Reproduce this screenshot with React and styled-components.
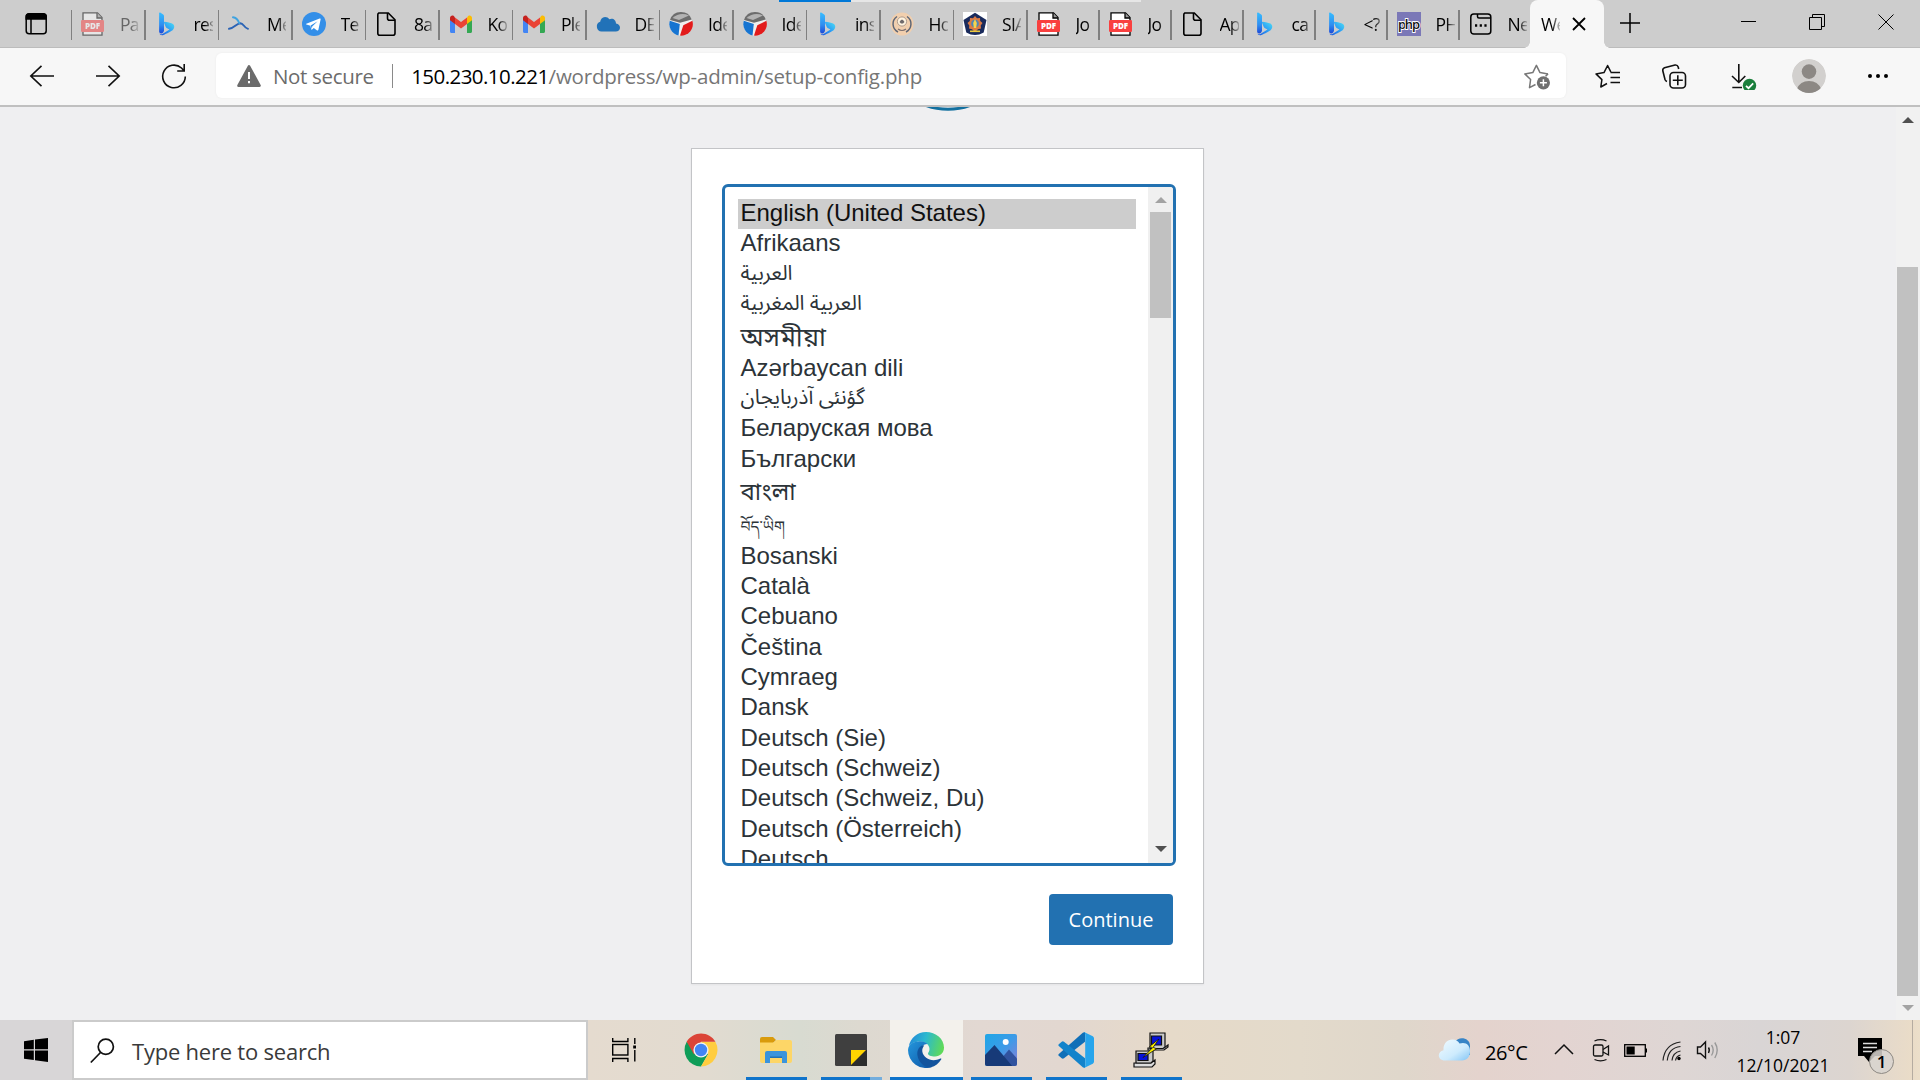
import React from "react";
import styled, { createGlobalStyle, css } from "styled-components";

const GlobalStyle = createGlobalStyle`
  *, *::before, *::after { box-sizing: border-box; }
  html, body { margin: 0; padding: 0; overflow: hidden; }
  body { font-family: "Open Sans", "Noto Sans", sans-serif; color: #000; }
  svg { display: block; flex: none; }
`;

const Screen = styled.div`
  position: relative;
  width: 1920px;
  height: 1080px;
  display: flex;
  flex-direction: column;
  overflow: hidden;
  background: #efeff1;
`;

/* ---------- tab strip ---------- */

const LoadBar = styled.div`
  position: absolute;
  top: 0;
  left: 779px;
  width: 362px;
  height: 2px;
  background: linear-gradient(90deg, #0078d7 72px, #e6e6e6 72px);
`;

const TabStrip = styled.div`
  display: flex;
  height: 48px;
  flex: none;
  background: #cdcdcd;
  border-bottom: 1px solid #bcbcbc;
`;

const TabActions = styled.div`
  width: 70px;
  padding: 12px 0 0 24px;
`;

const Tab = styled.div`
  position: relative;
  display: flex;
  align-items: center;
  flex: none;
  width: ${(p) => p.$width}px;
  height: 48px;
  padding-left: 11px;

  &::before {
    content: "";
    position: absolute;
    left: 0.5px;
    top: 10px;
    width: 1.5px;
    height: 30px;
    background: #808080;
  }
`;

const TabIcon = styled.span`
  width: 24px;
  height: 24px;
  margin-right: 15px;
  flex: none;
  opacity: ${(p) => (p.$faded ? 0.5 : 1)};
`;

const TabTitle = styled.span`
  width: 19px;
  overflow: hidden;
  white-space: nowrap;
  font-size: 17.5px;
  line-height: 24px;
  letter-spacing: -0.7px;
  color: ${(p) => (p.$faded ? "#666" : "#000")};
  mask-image: linear-gradient(90deg, #000 55%, rgba(0, 0, 0, 0.2) 100%);
`;

const ActiveTab = styled.div`
  position: relative;
  display: flex;
  align-items: center;
  flex: none;
  width: 74px;
  height: 48px;
  padding-left: 11px;
  gap: 12px;
  background: #f7f7f7;
  border-radius: 8px 8px 0 0;

  &::before, &::after {
    content: "";
    position: absolute;
    bottom: 0;
    width: 6px;
    height: 6px;
  }
  &::before { left: -6px; background: radial-gradient(circle at 0 0, transparent 5.5px, #f7f7f7 6px); }
  &::after { right: -6px; background: radial-gradient(circle at 100% 0, transparent 5.5px, #f7f7f7 6px); }
`;

const NewTab = styled.div`
  padding: 12px 0 0 15px;
`;

const WindowButtons = styled.div`
  display: flex;
  gap: 53px;
  margin-left: auto;
  padding: 13px 26px 0 0;
`;

/* ---------- toolbar ---------- */

const Toolbar = styled.div`
  display: flex;
  align-items: center;
  flex: none;
  height: 59px;
  padding-bottom: 2px;
  background: #f7f7f7;
  border-bottom: 2px solid #c0c0c0;
`;

const NavButtons = styled.div`
  display: flex;
  gap: 38px;
  width: 216px;
  padding-left: 28px;
`;

const AddressBar = styled.div`
  display: flex;
  align-items: center;
  width: 1350px;
  height: 45px;
  padding: 0 15px 0 20px;
  background: #fff;
  border-radius: 6px;
  font-size: 20.5px;
  white-space: pre;
  box-shadow: 0 0 3px rgba(0, 0, 0, 0.05);
`;

const NotSecure = styled.span`
  margin-left: 11px;
  letter-spacing: -0.33px;
  color: #6b6b6b;
`;

const AddressDivider = styled.span`
  width: 1.5px;
  height: 24px;
  margin: 0 18px 0 18px;
  background: #8a8a8a;
`;

const Host = styled.span`
  letter-spacing: -0.55px;
  color: #000;
`;

const Path = styled.span`
  flex: 1;
  letter-spacing: -0.2px;
  color: #767676;
`;

const ToolbarButtons = styled.div`
  display: flex;
  align-items: center;
  gap: 38px;
  padding-left: 28px;
`;

const AvatarButton = styled.span`
  margin: 0 2px 0 -3px;
`;

/* ---------- page ---------- */

const Viewport = styled.div`
  display: flex;
  flex: none;
  height: 913px;
`;

const Page = styled.main`
  display: flex;
  flex-direction: column;
  align-items: center;
  width: 1896px;
  background: #efeff1;
`;

const LogoClip = styled.div`
  display: flex;
  height: 41px;
  overflow: hidden;
`;

const Card = styled.section`
  display: flex;
  flex-direction: column;
  align-items: flex-end;
  width: 513px;
  height: 836px;
  margin-right: 1px;
  padding: 35px 27px 0 30px;
  background: #fff;
  border: 1px solid #c3c4c7;
  box-shadow: 0 1px 2px rgba(0, 0, 0, 0.05);
`;

const SelectBox = styled.div`
  display: flex;
  width: 454px;
  height: 682px;
  border: 3px solid #2271b1;
  border-radius: 6px;
  background: #fff;
  overflow: hidden;
`;

const OptionList = styled.div`
  flex: 1;
  padding: 12px 12px 0 13px;
  height: 676px;
  overflow: hidden;
`;

const Option = styled.div`
  height: ${(p) => p.$height}px;
  padding-left: 2.5px;
  line-height: 27px;
  font-family: "Liberation Sans", "Noto Sans", "DejaVu Sans", sans-serif;
  font-size: 24px;
  white-space: nowrap;
  color: #2c3338;
  ${(p) => p.$selected && css`background: #cdcdcd; color: #101010;`}
`;

const Script = styled.span`
  display: block;
  padding-top: ${(p) => p.$drop}px;
  font-family: "Noto Sans Arabic", "Noto Sans Bengali", "Noto Serif Tibetan", "DejaVu Sans", sans-serif;
  font-size: ${(p) => p.$size}px;
`;

const SelectScroll = styled.div`
  display: flex;
  flex-direction: column;
  align-items: center;
  width: 25px;
  padding: 10px 0 11px;
  background: #f0f0f0;
`;

const Arrow = styled.i`
  width: 0;
  height: 0;
  border: solid transparent;
  border-width: 0 6px;
  ${(p) => (p.$up
    ? css`border-bottom: 6px solid ${p.$color};`
    : css`border-top: 6px solid ${p.$color}; margin-top: auto;`)}
`;

const Thumb = styled.div`
  width: 21px;
  height: ${(p) => p.$height}px;
  margin-top: ${(p) => p.$gap}px;
  background: #c1c1c1;
`;

const ContinueButton = styled.button`
  width: 124px;
  height: 51px;
  margin: 28px 3px 0 0;
  padding: 0 0 1px;
  border: 0;
  border-radius: 4px;
  background: #2271b1;
  color: #fff;
  font: 400 20px "Open Sans", sans-serif;
`;

const PageScroll = styled.div`
  display: flex;
  flex-direction: column;
  align-items: center;
  width: 24px;
  padding: 10px 1px 9px 0;
  background: #f1f1f1;
`;

/* ---------- taskbar ---------- */

const Taskbar = styled.footer`
  display: flex;
  flex: none;
  height: 60px;
  background: linear-gradient(90deg, #d8d6d7 0, #d8d6d7 73px, #e5dbcf 590px, #e2dbd0 700px,
    #d8dbd1 800px, #ddd9d0 860px, #e2d8d2 980px, #e2d7d0 1060px, #e6dac9 1170px, #e3dacb 1300px, #dfd7cb 1400px, #e4d3cd 1480px,
    #e3d4d1 1560px, #ded6d4 1680px, #d9d5d5 1760px, #dcd5d0 1850px, #eadcc8 1912px, #ecdfca 1920px);
`;

const Start = styled.div`
  width: 72px;
  padding: 18px 0 0 24px;
`;

const SearchBox = styled.div`
  display: flex;
  width: 516px;
  height: 60px;
  padding: 16px 0 0 16px;
  gap: 17px;
  background: #fff;
  border: 2px solid #cbcbcb;
  font-size: 22px;
  line-height: 26px;
  letter-spacing: -0.22px;
  color: #3a3a3a;
`;

const TaskItem = styled.div`
  display: flex;
  justify-content: center;
  width: ${(p) => p.$width || 75}px;
  height: 60px;
  padding: ${(p) => p.$top || 12}px ${(p) => p.$right || 1}px 0 0;
`;

const AppItem = styled(TaskItem)`
  position: relative;
  background: ${(p) => (p.$active ? "#f3f1ec" : "transparent")};
  margin: ${(p) => (p.$active ? "0 1px" : "0")};
  width: ${(p) => (p.$active ? 73 : 75)}px;

  &::after {
    content: "";
    position: absolute;
    bottom: 0;
    left: ${(p) => (p.$active ? 0 : 7)}px;
    right: ${(p) => (p.$active ? 0 : 7)}px;
    height: 3px;
    background: ${(p) => (p.$stacked
      ? "linear-gradient(90deg, #0f74cb 49px, #73addd 49px)"
      : "#0f74cb")};
  }
`;

const Tray = styled.div`
  display: flex;
  align-items: flex-start;
  margin-left: auto;
  padding-top: 18px;
`;

const Temperature = styled.span`
  width: 81px;
  margin-top: 2px;
  padding-left: 13px;
  font-size: 20px;
  line-height: 26px;
  letter-spacing: -0.4px;
`;

const TrayIcons = styled.div`
  display: flex;
  align-items: flex-start;
  gap: 14px;
`;

const Clock = styled.div`
  width: 108px;
  margin: -15px 0 0 9px;
  font-size: 17.5px;
  line-height: 28px;
  text-align: center;
`;

const Notifications = styled.div`
  position: relative;
  width: 54px;
  margin-left: 21px;
`;

const Badge = styled.span`
  position: absolute;
  left: 11px;
  top: 11px;
  width: 25px;
  height: 25px;
  border: 1.5px solid #8d8983;
  border-radius: 50%;
  background: rgba(216, 212, 207, 0.86);
  font-size: 17px;
  line-height: 23px;
  font-weight: 600;
  text-align: center;
`;

const DesktopEdge = styled.div`
  width: 8px;
  height: 60px;
  margin-top: -18px;
  border-left: 1.5px solid #b5aca1;
`;

/* ---------- icons ---------- */

const PdfIcon = () => (
  <svg width="24" height="24" viewBox="0 0 24 24">
    <path d="M2 .8h14.5L21 5.5V23.200H2z" fill="#fff" stroke="#000" strokeWidth="1.3" />
    <path d="M16 .8V6h5" fill="#999" stroke="#000" strokeWidth="1.3" />
    <rect y="8" width="23" height="12" rx="1.2" fill="#f9403f" />
    <text x="11.500" y="16.800" fontFamily="Open Sans" fontWeight="800" fontSize="8" fill="#fff" textAnchor="middle">PDF</text>
  </svg>
);

const BingIcon = () => (
  <svg width="24" height="24" viewBox="0 0 24 24">
    <defs>
      <linearGradient id="bingA" x1="0" y1="0" x2="0" y2="1">
        <stop offset="0" stopColor="#37bdff" /><stop offset=".6" stopColor="#2f8df0" /><stop offset="1" stopColor="#1b48d8" />
      </linearGradient>
      <linearGradient id="bingB" x1="0" y1="1" x2="1" y2="0">
        <stop offset="0" stopColor="#1b52dd" /><stop offset=".5" stopColor="#2b9cf5" /><stop offset="1" stopColor="#4fe0f3" />
      </linearGradient>
    </defs>
    <path d="M9.600 9.700c-.6.1-.8.600-.5 1.300l1.700 4c.3.600.7 1 1.300 1.300l2.400 1.200-6.700 4.200c-2 1.200-3.700.3-3.700-1.400 0 2.300 2.300 3.500 4.400 2.700 3-1.200 8-3.500 9.500-5.200 2.300-2.700 1.300-5.600-1.500-6.500-2.500-.8-4.600-1.500-6.900-1.600z" fill="url(#bingB)" />
    <path d="M4.100 1.200c0-.7.500-.9 1.100-.6l3 1.900c.6.400.8.800.8 1.500v14.500c0 1.500-1.300 3-2.800 3s-2.100-1-2.100-2.500z" fill="url(#bingA)" />
  </svg>
);

const WaveIcon = () => (
  <svg width="24" height="24" viewBox="0 0 24 24" fill="none" strokeLinecap="round">
    <path d="M1 16.800C6.500 16.300 8.500 11.300 12.300 11.200c3.500 0 3.200 4.500 7.700 5.600" stroke="#2b63b5" strokeWidth="1.900" />
    <path d="M5 5.300c3.800.4 5 2.700 6.200 5.700" stroke="#3fa3e0" strokeWidth="2" />
  </svg>
);

const TelegramIcon = () => (
  <svg width="24" height="24" viewBox="0 0 24 24">
    <circle cx="12" cy="12" r="12" fill="#348fe8" />
    <path d="M4.300 11.800 17.600 6.500c.7-.2 1.200.2 1 1.100l-2.200 10.200c-.2.800-.7 1-1.300.6l-3.300-2.500-1.700 1.600c-.5.4-.8.2-.9-.4l-.8-3.300-3.900-1.200c-.9-.2-.9-.6-.2-.8z" fill="#fff" />
    <path d="m8.700 13.600 6.900-4.400-5.400 5.400-.3 2.300z" fill="#348fe8" />
  </svg>
);

const FileIcon = () => (
  <svg width="24" height="24" viewBox="0 0 24 24" fill="none" stroke="#000" strokeWidth="1.600">
    <path d="M3.800 1h9.500L20 7.800V21.200a2 2 0 0 1-2 2H4.800a2 2 0 0 1-2-2V3a2 2 0 0 1 1-2z" />
    <path d="M12.500 1v5.300a2 2 0 0 0 2 2H20" />
  </svg>
);

const GmailIcon = () => (
  <svg width="24" height="24" viewBox="0 0 24 24">
    <path d="M1 7v12.500c0 .9.600 1.500 1.500 1.500H6V11z" fill="#4285f4" />
    <path d="M18 11v10h3.500c.9 0 1.500-.6 1.500-1.500V7z" fill="#34a853" />
    <path d="M18 5.500V12l5-3.800V6c0-2-2.200-3.200-3.800-2z" fill="#fbbc04" />
    <path d="M6 12V5.500l6 4.400 6-4.400V12l-6 4.500z" fill="#ea4335" />
    <path d="M1 6v2.200L6 12V5.500L4.800 4C3.200 2.800 1 4 1 6z" fill="#c5221f" />
  </svg>
);

const CloudIcon = () => (
  <svg width="24" height="24" viewBox="0 0 24 24">
    <path d="M5.500 19.500a5 5 0 0 1-1.300-9.700A5.500 5.500 0 0 1 9 5c2 0 3.200.8 4.300 2.200C16.800 5.500 20 8 20 11.500c2.600.4 4 2.200 4 4.200 0 2.300-1.800 3.800-4.200 3.800z" fill="#2172b8" />
  </svg>
);

const BallIcon = () => (
  <svg width="24" height="24" viewBox="0 0 24 24">
    <circle cx="12" cy="12" r="11.600" fill="#efefef" />
    <path d="M1 8A11.600 11.600 0 0 1 22.800 7.500L11 10.700z" fill="#6d6d6d" />
    <path d="M3.500 6Q11-.3 20 3.500L10 8z" fill="#b3b3b3" />
    <path d="M.8 8.800 10.800 12 9.500 23.400A11.600 11.600 0 0 1 .8 8.800z" fill="#1674d1" />
    <path d="M23.400 8.800A11.600 11.600 0 0 1 11 23.600L14.300 13.200z" fill="#e21b1b" />
  </svg>
);

const RoundSealIcon = () => (
  <svg width="24" height="24" viewBox="0 0 24 24">
    <circle cx="12" cy="12" r="11.500" fill="#f1cfae" />
    <path d="M8 20a9 9 0 0 1-1-15.500M16 20a9 9 0 0 0 1-15.500" fill="none" stroke="#5f6675" strokeWidth="1.500" />
    <circle cx="12" cy="9.500" r="4.600" fill="#fff3df" stroke="#9a8a80" strokeWidth=".8" />
    <path d="M9.500 10q2.500-5 5 0l-1.500 1.500h-2z" fill="#6f6a6c" />
    <path d="M8 17q4 3 8 0" fill="none" stroke="#7a6f70" strokeWidth="1.100" />
  </svg>
);

const CrestIcon = () => (
  <svg width="24" height="24" viewBox="0 0 24 24">
    <path d="M0 0h24v24H0z" fill="#fff" />
    <path d="M12 .7 23.500 8l-2.800 12.500Q12 25.500 3.300 20.500L.5 8z" fill="#1a2b5c" />
    <path d="m12 4 2 2.300 3-.3.2 3 2.300 2-1.800 2.500.3 3-3 .8L12 20l-3-2.700-3-.8.300-3L4.500 11l2.300-2L7 6l3 .3z" fill="#dc7b44" />
    <circle cx="12" cy="11.500" r="3.800" fill="#4e87b5" />
    <path d="M12 7l1.800 4-.6 5h-2.400l-.6-5z" fill="#f6d34c" />
    <path d="M7 18.500h10v1.600H7z" fill="#e9c93f" />
  </svg>
);

const PhpIcon = () => (
  <svg width="24" height="24" viewBox="0 0 24 24">
    <path d="M0 0h24v24H0z" fill="#7b78b7" />
    <text x="12" y="16.500" textAnchor="middle" fontFamily="Open Sans" fontWeight="600" fontSize="13" textLength="22" fill="#111" stroke="#fff" strokeWidth="1.800" paintOrder="stroke">php</text>
  </svg>
);

const NotionTabIcon = () => (
  <svg width="24" height="24" viewBox="0 0 24 24" fill="none" stroke="#000" strokeWidth="1.500">
    <rect x="1.800" y="2" width="20" height="20" rx="3" />
    <path d="M8.500 2v2.500q0 1.500 1.500 1.500H21.500" />
    <path d="M6 13.500h2.200M10.700 13.500h2.200M15.400 13.500h2.200" strokeWidth="2.400" />
  </svg>
);

const TabActionsIcon = () => (
  <svg width="24" height="24" viewBox="0 0 24 24" fill="none" stroke="#000" strokeWidth="1.500">
    <rect x="2.200" y="2" width="20" height="19.700" rx="3" />
    <path d="M2.200 7V4.800a3 3 0 0 1 3-3h14a3 3 0 0 1 3 3V7z" fill="#000" />
    <path d="M7 7v14.500" />
  </svg>
);

const BackIcon = () => (
  <svg width="28" height="28" viewBox="0 0 28 28" fill="none" stroke="#111" strokeWidth="1.600">
    <path d="M26 14H3M13.500 3.800 2.800 14l10.700 10.200" />
  </svg>
);

const ForwardIcon = () => (
  <svg width="28" height="28" viewBox="0 0 28 28" fill="none" stroke="#111" strokeWidth="1.600">
    <path d="M2 14h23M14.500 3.800 25.200 14 14.500 24.200" />
  </svg>
);

const RefreshIcon = () => (
  <svg width="28" height="28" viewBox="0 0 28 28" fill="none" stroke="#111" strokeWidth="1.600">
    <path d="M25.300 14.500A11.300 11.300 0 1 1 21.500 6l2.500 2.700M24.200 2v7h-7" />
  </svg>
);

const WarningIcon = () => (
  <svg width="26" height="24" viewBox="0 0 26 24">
    <path d="M13 2.300 23.500 21.700h-21z" fill="#6b6b6b" stroke="#6b6b6b" strokeWidth="2.600" strokeLinejoin="round" />
    <path d="M13 8v7M13 17v2.200" stroke="#fff" strokeWidth="2" />
  </svg>
);

const starPath = "M12.500 22.500 6.500 25.600 7.600 17.500 1.800 11.900 9.800 10.600 13.400 3.400 17 10.600 25 11.900";

const AddFavoriteIcon = () => (
  <svg width="28" height="28" viewBox="0 0 28 28" fill="none" stroke="#777" strokeWidth="1.500">
    <path d={starPath} strokeLinejoin="round" />
    <path d="m25 11.900-2.400 2.300" />
    <circle cx="20.400" cy="20.800" r="6.600" fill="#6f6f6f" stroke="none" />
    <path d="M20.400 17.300v7M16.900 20.800h7" stroke="#fff" />
  </svg>
);

const FavoritesIcon = () => (
  <svg width="28" height="28" viewBox="0 0 28 28" fill="none" stroke="#111" strokeWidth="1.500">
    <path d="M13 21.500 6.800 25 7.900 17.600 2 11.900l8-1.300L13.600 3.500l3.200 6.400M16.500 10.500H26M16.500 15.500H26M16.500 20.500H26" strokeLinejoin="round" />
  </svg>
);

const CollectionsIcon = () => (
  <svg width="28" height="28" viewBox="0 0 28 28" fill="none" stroke="#111" strokeWidth="1.600">
    <path d="M7 19.500Q5.500 19 5 17.500L2.800 8.800Q2.500 6.500 4.500 5.700L15 3q2.500-.3 3.200 2l.5 2" />
    <rect x="10" y="10.500" width="15.500" height="15.500" rx="3.500" />
    <path d="M17.800 13.300v10M12.800 18.300h10" />
  </svg>
);

const DownloadIcon = () => (
  <svg width="31" height="28" viewBox="-3 0 31 28" fill="none" stroke="#111" strokeWidth="1.600">
    <path d="M9.800 2v18M3 14l6.800 6.500 6.500-6.500M3.300 25.500H13" />
    <circle cx="20.500" cy="23.500" r="6.700" fill="#1a7f3c" stroke="none" />
    <path d="m17 23.800 2.500 2.400 4.700-4.800" stroke="#fff" strokeWidth="1.700" />
  </svg>
);

const Avatar = () => (
  <svg width="34" height="34" viewBox="0 0 34 34">
    <defs><clipPath id="avatarClip"><circle cx="17" cy="17" r="17" /></clipPath></defs>
    <g clipPath="url(#avatarClip)">
      <circle cx="17" cy="17" r="17" fill="#d2d0ce" />
      <circle cx="17" cy="12.600" r="7.300" fill="#8c8884" />
      <path d="M5 30q3-8 12-8t12 8v4H5z" fill="#8c8884" />
    </g>
  </svg>
);

const MoreIcon = () => (
  <svg width="24" height="28" viewBox="0 0 24 28">
    <circle cx="4" cy="14" r="2" /><circle cx="12" cy="14" r="2" /><circle cx="20" cy="14" r="2" />
  </svg>
);

const SearchIcon = () => (
  <svg width="25" height="26" viewBox="0 0 25 26" fill="none" stroke="#111" strokeWidth="1.700">
    <circle cx="15.800" cy="8.800" r="7.600" /><path d="M10.500 14.500.8 24.500" />
  </svg>
);

const WindowsIcon = () => (
  <svg width="24" height="24" viewBox="0 0 24 24">
    <path d="M0 3.200 9.800 1.800v9.500H0zM11 1.600 24 0v11.300H11zM0 12.500h9.800V22L0 20.700zM11 12.500h13V24L11 22.200z" />
  </svg>
);

const TaskViewIcon = () => (
  <svg width="24" height="24" viewBox="0 0 24 24" fill="none" stroke="#000" strokeWidth="1.400">
    <path d="M.7 0v3.500h15.200V0M.7 24v-3.500h15.200V24" />
    <rect x=".7" y="6.500" width="15.200" height="10.500" />
    <path d="M22.800 0v6M22.800 12v11.500" /><path d="M21.200 7.500h3v3h-3z" fill="#000" stroke="none" />
  </svg>
);

const ChromeIcon = () => (
  <svg width="36" height="36" viewBox="0 0 36 36">
    <path d="M3.700 9.700A16.600 16.600 0 0 0 18 34.500L25.200 22.100 18 18z" fill="#0f9d58" />
    <path d="M32.400 9.800A16.600 16.600 0 0 1 18 34.500l7.200-12.400L18 9.800z" fill="#ffcd40" />
    <path d="M18 9.800h14.400A16.600 16.600 0 0 0 3.700 9.700l7.200 12.500z" fill="#db4437" />
    <circle cx="18" cy="18" r="7.600" fill="#f1f1f1" />
    <circle cx="18" cy="18" r="6.200" fill="#4285f4" />
  </svg>
);

const FolderIcon = () => (
  <svg width="36" height="36" viewBox="0 0 36 36">
    <path d="M2 7q0-2 2-2h11l3 3-3 3H2z" fill="#d99b0c" />
    <path d="M2 10.500h13.500L18.500 8H32q2 0 2 2v19q0 2-2 2H4q-2 0-2-2z" fill="#fdd667" />
    <path d="M7 31V21q0-2 2-2h18q2 0 2 2v10h-5v-5H12v5z" fill="#3a94dc" />
    <path d="M12 26h12v-1.500H12z" fill="#2272b5" />
  </svg>
);

const StickyNotesIcon = () => (
  <svg width="36" height="36" viewBox="0 0 36 36">
    <rect x="2" y="2" width="32" height="32" rx="1.500" fill="#3f3f3f" />
    <path d="M18 18h16v16H18z" fill="#2c2c2c" />
    <path d="M18 18h15L18 33z" fill="#ffd400" />
  </svg>
);

const EdgeIcon = () => (
  <svg width="36" height="36" viewBox="0 0 36 36">
    <defs>
      <linearGradient id="edgeTop" x1="0" y1=".3" x2="1" y2=".5">
        <stop offset="0" stopColor="#2389d8" /><stop offset=".45" stopColor="#2bb9cf" /><stop offset="1" stopColor="#5fda58" />
      </linearGradient>
      <linearGradient id="edgeLow" x1="0" y1="0" x2="1" y2="1">
        <stop offset="0" stopColor="#2496dc" /><stop offset="1" stopColor="#0d55a5" />
      </linearGradient>
    </defs>
    <path d="M.8 14.500C2.500 5.500 9.500 0 18 0c10 0 18 7 18 15.500 0 5.500-4 9-9 9-4 0-7-1.200-7-3 0-1 1.500-1.800 1.500-4.500 0-4-4-7.500-9.500-7.500S2.500 12 .8 14.500z" fill="url(#edgeTop)" />
    <path d="M0 18C.5 12 6 9.300 12 9.300c3 0 5.800 1 7.500 2.700-5 0-8 4-8 9C11.500 28.500 17 34 24 35A18 18 0 0 1 0 18z" fill="url(#edgeLow)" />
    <path d="M14.500 13.200C10.500 15 8.800 19 9.500 23.500 10.500 31 17.500 36 23 35.300c4-1 8-4 10.300-8 .3-.8-.3-1.100-1-.8-7.500 4-16.800.5-18-7-.3-2.400.6-4.500 2-6z" fill="#12549d" />
  </svg>
);

const PhotosIcon = () => (
  <svg width="36" height="36" viewBox="0 0 36 36">
    <defs>
      <linearGradient id="photoSky" x1="0" y1="0" x2="1" y2="1">
        <stop offset="0" stopColor="#1fa6e6" /><stop offset=".5" stopColor="#3c9be8" /><stop offset="1" stopColor="#8b7fd6" />
      </linearGradient>
      <clipPath id="photoClip"><rect x="2" y="2" width="32" height="32" rx="2" /></clipPath>
    </defs>
    <g clipPath="url(#photoClip)">
      <path d="M2 2h32v32H2z" fill="url(#photoSky)" />
      <path d="m18 27 8-9.500 9 10V35H18z" fill="#31539f" />
      <path d="m1 24 10.500-11L30 35H1z" fill="#173a78" />
      <circle cx="22.700" cy="10" r="3" fill="#fff" />
    </g>
  </svg>
);

const CodeIcon = () => (
  <svg width="36" height="36" viewBox="0 0 36 36">
    <path d="M27 0v9.800L6 26.300q-1.200.8-2.300 0L.8 23.800q-1-.9 0-1.800L24.800.8z" fill="#0f6fb8" />
    <path d="M27 36v-9.800L6 9.700q-1.200-.8-2.300 0L.8 12.200q-1 .9 0 1.800l24 21.200z" fill="#1283cb" />
    <path d="m26.500.2 8.300 4Q36 5 36 6.200v23.600q0 1.200-1.200 1.900l-8.300 4q-1 .4-1.800-.4 2.500 1 2.500-1.500V2.300Q27 0 24.800.8q.7-.9 1.700-.6z" fill="#27a5ec" />
  </svg>
);

const PuttyIcon = () => (
  <svg width="36" height="36" viewBox="0 0 36 36" stroke="#111" strokeWidth="1.200">
    <path d="M15 16h16l4-3v2l-4 3H15z" fill="#ddd" />
    <path d="M17 1h15v14l-2 1.500H17z" fill="#c9c9c9" />
    <path d="M18.500 4h10v9h-10z" fill="#0712d8" />
    <path d="M1 31h17l4-3v4l-3 3H1z" fill="#ddd" />
    <path d="M3 19h15l2-1v11l-2 2H3z" fill="#c9c9c9" />
    <path d="M5 21.500h10v7H5z" fill="#0712d8" />
    <path d="m26 7-9.500 7.500 3 1.200L10 25.500l13.500-8.700-3.300-1.500z" fill="#fff200" strokeWidth=".8" />
  </svg>
);

const WeatherIcon = () => (
  <svg width="34" height="24" viewBox="0 0 34 24">
    <defs>
      <linearGradient id="cloudFill" x1="0" y1="0" x2="1" y2="1">
        <stop offset="0" stopColor="#f2fbff" /><stop offset=".6" stopColor="#cdebfd" /><stop offset="1" stopColor="#84c5f5" />
      </linearGradient>
    </defs>
    <path d="M17 4c3-6 15-5 15 4v9H20z" fill="#3784c6" />
    <path d="M7 22.500c-8 0-8-9-1.500-10.200C5 5 10 1 15 1.500c3 .2 5 1.500 6.500 4C28 3.500 32 7 32 13c0 6-3 9.500-8 9.500z" fill="url(#cloudFill)" />
  </svg>
);

const ChevronUp = () => (
  <svg width="25" height="24" viewBox="0 0 25 24" fill="none" stroke="#111" strokeWidth="1.500">
    <path d="m2 16 9-9 9 9" />
  </svg>
);

const MeetIcon = () => (
  <svg width="18" height="24" viewBox="0 0 18 24" fill="none" stroke="#111" strokeWidth="1.300">
    <rect x="1.500" y="7" width="9.500" height="11" rx="1.500" />
    <path d="M11 11.500 16.500 8v9L11 14M2.500 3Q8.500.3 14.500 3M2.500 21.500q6 2.700 12 0" />
  </svg>
);

const BatteryIcon = () => (
  <svg width="24" height="24" viewBox="0 0 24 24">
    <rect x=".7" y="6.700" width="20.600" height="11.600" fill="none" stroke="#000" strokeWidth="1.300" />
    <path d="M2.500 8.500h8.200v8H2.500zM21.500 10.500H23v4h-1.500z" />
  </svg>
);

const WifiIcon = () => (
  <svg width="20" height="24" viewBox="0 0 20 24" fill="none" stroke="#222" strokeWidth="1.200">
    <path d="M1 22.500C2 12.500 8 5.500 18.500 4M5.300 22.500C6 15 10 9.500 18.500 8.500M10 22.500c.5-5 3-8.500 8.500-9.500M13.500 22.500q.8-4.500 5-5.500" />
    <circle cx="17" cy="20.500" r="1.700" fill="#000" stroke="none" />
  </svg>
);

const SpeakerIcon = () => (
  <svg width="24" height="24" viewBox="0 0 24 24" fill="none" stroke="#111" strokeWidth="1.400">
    <path d="M1.500 9v6.500h3l5 4.500V4l-5 5z" />
    <path d="M12.500 9.500q1.600 2.500 0 5.500" />
    <path d="M15.500 7q3.400 5 0 10.500M18.800 4.500q4.800 7.500 0 15.500" stroke="#999" />
  </svg>
);

const ActionCenterIcon = () => (
  <svg width="24" height="26" viewBox="0 0 24 26">
    <path d="M0 0h24v18H17L11 24 6 18H0z" />
    <path d="M5 5.500h14M5 9.500h14M5 13.500h9" stroke="#ddd" strokeWidth="1.300" />
  </svg>
);

const WordPressRing = () => (
  <svg width="126" height="4" viewBox="0 122 126 4">
    <circle cx="63" cy="63" r="61.300" fill="#efeff1" stroke="#13709f" strokeWidth="3" />
  </svg>
);

const PlusIcon = () => (
  <svg width="22" height="22" viewBox="0 0 22 22" stroke="#000" strokeWidth="1.500"><path d="M11 1v20M1 11h20" /></svg>
);
const CloseTabIcon = () => (
  <svg width="14" height="14" viewBox="0 0 14 14" stroke="#000" strokeWidth="1.800"><path d="m1 1 12 12M13 1 1 13" /></svg>
);
const MinimizeIcon = () => (
  <svg width="16" height="17" viewBox="0 0 16 17" stroke="#000"><path d="M1 8.500h15" /></svg>
);
const RestoreIcon = () => (
  <svg width="16" height="17" viewBox="0 0 16 17" fill="none" stroke="#000"><path d="M.5 4.500h12v12H.5zM3.500 4.500v-3h12v12h-3" /></svg>
);
const CloseIcon = () => (
  <svg width="16" height="17" viewBox="0 0 16 17" stroke="#000"><path d="m.5 1.500 15 15M15.500 1.500l-15 15" /></svg>
);

/* ---------- data ---------- */

const tabs = [
  { title: "Pa", icon: PdfIcon, faded: true },
  { title: "res", icon: BingIcon },
  { title: "Me", icon: WaveIcon },
  { title: "Tel", icon: TelegramIcon },
  { title: "8a", icon: FileIcon },
  { title: "Ko", icon: GmailIcon },
  { title: "Ple", icon: GmailIcon },
  { title: "DE", icon: CloudIcon },
  { title: "Ide", icon: BallIcon },
  { title: "Ide", icon: BallIcon },
  { title: "ins", icon: BingIcon },
  { title: "Ho", icon: RoundSealIcon },
  { title: "SIA", icon: CrestIcon },
  { title: "Jo", icon: PdfIcon },
  { title: "Jo", icon: PdfIcon },
  { title: "Ap", icon: FileIcon },
  { title: "ca", icon: BingIcon },
  { title: "<?", icon: BingIcon },
  { title: "PH", icon: PhpIcon },
  { title: "Ne", icon: NotionTabIcon },
];

const languages = [
  { name: "English (United States)", selected: true },
  { name: "Afrikaans", height: 31 },
  { name: "العربية", size: 20.7 },
  { name: "العربية المغربية", size: 20.7 },
  { name: "অসমীয়া", height: 34, size: 26, drop: 3.5 },
  { name: "Azərbaycan dili" },
  { name: "گؤنئی آذربایجان", size: 20.7 },
  { name: "Беларуская мова", height: 31 },
  { name: "Български" },
  { name: "বাংলা", height: 34, size: 24, drop: 3.5 },
  { name: "བོད་ཡིག", height: 33, size: 15.6, drop: 5 },
  { name: "Bosanski" },
  { name: "Català" },
  { name: "Cebuano", height: 31 },
  { name: "Čeština" },
  { name: "Cymraeg" },
  { name: "Dansk", height: 31 },
  { name: "Deutsch (Sie)" },
  { name: "Deutsch (Schweiz)" },
  { name: "Deutsch (Schweiz, Du)", height: 31 },
  { name: "Deutsch (Österreich)" },
  { name: "Deutsch" },
];

const apps = [
  { icon: FolderIcon },
  { icon: StickyNotesIcon, stacked: true },
  { icon: EdgeIcon, active: true },
  { icon: PhotosIcon },
  { icon: CodeIcon },
  { icon: PuttyIcon },
];

const tabWidth = (i) => (i < 13 ? 73.5 : i < 19 ? 72 : 72.5);

export default function App() {
  return (
    <Screen>
      <GlobalStyle />
      <TabStrip>
        <TabActions><TabActionsIcon /></TabActions>
        {tabs.map(({ title, icon: Icon, faded }, i) => (
          <Tab key={i} $width={tabWidth(i)}>
            <TabIcon $faded={faded}><Icon /></TabIcon>
            <TabTitle $faded={faded}>{title}</TabTitle>
          </Tab>
        ))}
        <ActiveTab>
          <TabTitle>We</TabTitle>
          <CloseTabIcon />
        </ActiveTab>
        <NewTab><PlusIcon /></NewTab>
        <WindowButtons><MinimizeIcon /><RestoreIcon /><CloseIcon /></WindowButtons>
      </TabStrip>
      <LoadBar />

      <Toolbar>
        <NavButtons><BackIcon /><ForwardIcon /><RefreshIcon /></NavButtons>
        <AddressBar>
          <WarningIcon />
          <NotSecure>Not secure</NotSecure>
          <AddressDivider />
          <Host>150.230.10.221</Host>
          <Path>/wordpress/wp-admin/setup-config.php</Path>
          <AddFavoriteIcon />
        </AddressBar>
        <ToolbarButtons>
          <FavoritesIcon />
          <CollectionsIcon />
          <DownloadIcon />
          <AvatarButton><Avatar /></AvatarButton>
          <MoreIcon />
        </ToolbarButtons>
      </Toolbar>

      <Viewport>
        <Page>
          <LogoClip><WordPressRing /></LogoClip>
          <Card>
            <SelectBox>
              <OptionList>
                {languages.map(({ name, height = 30, size, drop = 0, selected }) => (
                  <Option key={name} $height={height} $selected={selected}>
                    {size ? <Script $size={size} $drop={drop}>{name}</Script> : name}
                  </Option>
                ))}
              </OptionList>
              <SelectScroll>
                <Arrow $up $color="#a3a3a3" />
                <Thumb $height={106} $gap={9} />
                <Arrow $color="#505050" />
              </SelectScroll>
            </SelectBox>
            <ContinueButton>Continue</ContinueButton>
          </Card>
        </Page>
        <PageScroll>
          <Arrow $up $color="#505050" />
          <Thumb $height={729} $gap={144} />
          <Arrow $color="#a3a3a3" />
        </PageScroll>
      </Viewport>

      <Taskbar>
        <Start><WindowsIcon /></Start>
        <SearchBox><SearchIcon />Type here to search</SearchBox>
        <TaskItem $top={18} $right={3}><TaskViewIcon /></TaskItem>
        <TaskItem $width={76}><ChromeIcon /></TaskItem>
        {apps.map(({ icon: Icon, active, stacked }, i) => (
          <AppItem key={i} $active={active} $stacked={stacked}><Icon /></AppItem>
        ))}
        <Tray>
          <WeatherIcon />
          <Temperature>26°C</Temperature>
          <TrayIcons>
            <ChevronUp /><MeetIcon /><BatteryIcon /><WifiIcon /><SpeakerIcon />
          </TrayIcons>
          <Clock>1:07<br />12/10/2021</Clock>
          <Notifications><ActionCenterIcon /><Badge>1</Badge></Notifications>
          <DesktopEdge />
        </Tray>
      </Taskbar>
    </Screen>
  );
}
